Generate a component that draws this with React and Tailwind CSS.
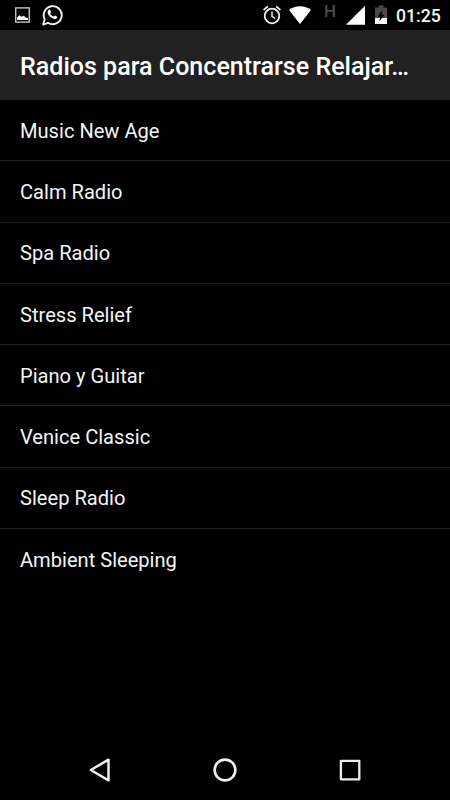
const stations = [
  "Music New Age",
  "Calm Radio",
  "Spa Radio",
  "Stress Relief",
  "Piano y Guitar",
  "Venice Classic",
  "Sleep Radio",
  "Ambient Sleeping",
];

function StatusBar() {
  return (
    <div className="flex h-[30px] shrink-0 items-center justify-between pl-[15px] pr-[10px]">
      {/* Notifications */}
      <div className="flex items-center gap-3">
        <svg width="15" height="16" viewBox="0 0 15 16" fill="none">
          <rect x="0.7" y="0.9" width="13.6" height="14.2" stroke="#c4c4c4" strokeWidth="1.4" />
          <path d="M2 13V10.6L4.4 8.2L6.5 9.8L9 8.8L10.5 10.4L13 11V13Z" fill="#fff" />
        </svg>
        <svg width="21" height="22" viewBox="0 0 21 22" fill="none">
          <path
            d="M1.2 20.6L2.7 15.2A9 9 0 1 1 6 18.8Z"
            stroke="#f0f0f0"
            strokeWidth="1.9"
            strokeLinejoin="round"
          />
          <path
            d="M6.3 6.2C7 5.4 7.8 5.4 8.2 6L9 8C9.1 8.6 8.3 9 8.2 9.5C9 11 10.1 12 11.6 12.6C12.3 12.6 12.6 11.5 13.2 11.6L15.3 12.7C15.7 13.8 14.3 15.2 12.8 15.1C9.6 14.8 5.9 11.2 5.6 8.5C5.5 7.6 5.8 6.8 6.3 6.2Z"
            fill="#fff"
          />
        </svg>
      </div>

      {/* System icons */}
      <div className="flex items-center">
        <svg width="18" height="20" viewBox="0 0 18 20" fill="none" stroke="#f5f5f5">
          <circle cx="9" cy="11" r="7.3" strokeWidth="1.8" />
          <path d="M9 6.6V11.3L12.2 13.5" strokeWidth="1.4" />
          <path d="M0.6 5L4.8 1.4M17.4 5L13.2 1.4" strokeWidth="1.8" />
        </svg>
        <svg className="ml-[8px]" width="22" height="20" viewBox="0 0 22 20">
          <path d="M0 5C6 0 16 0 22 5L11 19Z" fill="#fff" />
        </svg>
        <span className="ml-[13px] -mt-[8px] w-[12px] text-[17px] leading-4 font-medium text-[#4a4a4a]">
          H
        </span>
        <svg className="ml-[10px]" width="19" height="20" viewBox="0 0 19 20">
          <path d="M0 19.7L19 0.8V19.7Z" fill="#fff" />
        </svg>
        <svg className="ml-[10px]" width="12" height="20" viewBox="0 0 12 20">
          <path d="M0 2.5H3.5V0.5H8.5V2.5H12V13H0Z" fill="#4a4a4a" />
          <path d="M0 13H12V19H0Z" fill="#fff" />
          <path d="M7.6 5.3L2.4 11.8H5.4L4.2 16.4L9.6 9.8H6.6Z" fill="#000" />
        </svg>
        <span className="ml-[9px] mt-[2px] w-[44px] whitespace-nowrap text-[17.7px] leading-5 font-medium text-gray-100">
          01:25
        </span>
      </div>
    </div>
  );
}

function NavBar() {
  return (
    <div className="flex h-[60px] shrink-0 items-center justify-center gap-[101px]">
      <svg width="24" height="26" viewBox="0 0 24 26" fill="none">
        <path d="M2.8 13L20.5 2.7V23.3Z" stroke="#eee" strokeWidth="2.5" strokeLinejoin="round" />
      </svg>
      <svg width="24" height="26" viewBox="0 0 24 26" fill="none">
        <circle cx="12" cy="13" r="10.4" stroke="#eee" strokeWidth="2.6" />
      </svg>
      <svg width="24" height="26" viewBox="0 0 24 26" fill="none">
        <rect x="2.9" y="3.9" width="18.4" height="18.4" stroke="#eee" strokeWidth="2.3" strokeLinejoin="round" />
      </svg>
    </div>
  );
}

export default function App() {
  return (
    <div className="flex h-[800px] w-[450px] flex-col overflow-hidden bg-black font-['Roboto',sans-serif]">
      <StatusBar />

      <header className="flex h-[70px] shrink-0 items-center bg-[#212121] px-5 pt-1">
        <h1 className="whitespace-nowrap text-[25.05px] leading-8 font-medium text-white">
          Radios para Concentrarse Relajar…
        </h1>
      </header>

      <ul className="flex-1">
        {stations.map((station) => (
          <li
            key={station}
            className="flex h-[61.25px] items-center border-b-[1.5px] border-[#222] px-5 pt-[1.5px] text-[20.1px] leading-6 text-gray-100 last:border-transparent"
          >
            {station}
          </li>
        ))}
      </ul>

      <NavBar />
    </div>
  );
}
